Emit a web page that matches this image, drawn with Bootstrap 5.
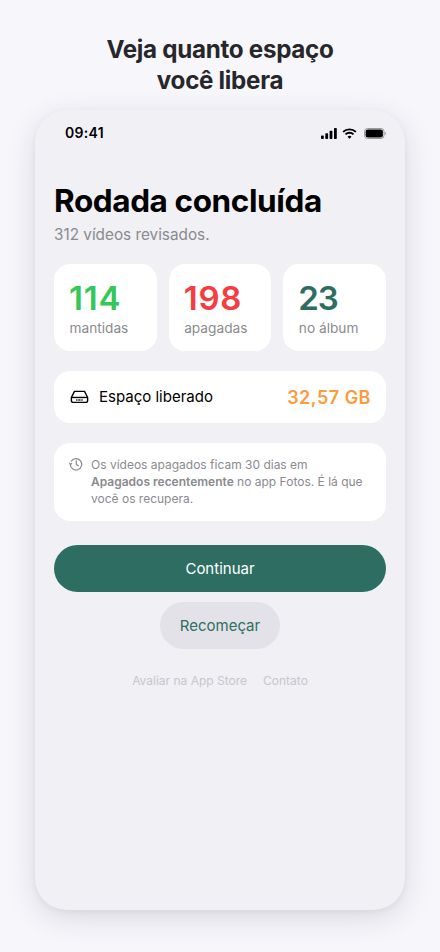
<!DOCTYPE html>
<html lang="pt-BR">
<head>
<meta charset="utf-8">
<title>Rodada concluída</title>
<link href="https://cdn.jsdelivr.net/npm/bootstrap@5.3.0/dist/css/bootstrap.min.css" rel="stylesheet">
<style>
html,body{height:100%;}
body{background:#f6f6fb;font-family:Inter,"Liberation Sans",sans-serif;overflow:hidden;color:#000;}
.shot{width:440px;height:952px;padding-top:34px;}
.headline{font-size:24.2px;line-height:31px;font-weight:700;letter-spacing:-.3px;color:#26262b;margin:0 0 14px;height:62px;}
.phone{width:370px;height:800px;margin:0 auto;background:#f0f0f5;border-radius:32px;box-shadow:0 2px 6px rgba(30,30,50,.05),0 8px 30px rgba(30,30,50,.13);padding:0 19px;}
.statusline{height:46px;padding:0 0 0 11px;margin-bottom:25px;}
.clock{font-size:14px;font-weight:600;letter-spacing:.3px;line-height:46px;}
.status-icons{gap:5px;}
.batt{margin-left:2px;}
.maintitle{font-size:31.5px;line-height:40px;font-weight:700;letter-spacing:-.4px;margin:0 0 3px;}
.subline{font-size:15.3px;line-height:22px;color:#8a8a8e;margin:0 0 18px;}
.statrow{gap:12px;}
.tile{background:#fff;border-radius:16px;}
.stat{flex:1 1 0;height:87px;padding:15px 15px 0;}
.num{font-size:33px;line-height:39px;font-weight:600;}
.lbl{font-size:13.7px;line-height:20px;color:#8a8a8e;padding-left:.5px;}
.c-green{color:#34c759;letter-spacing:.8px;}
.c-red{color:#f63c41;letter-spacing:.8px;}
.c-teal{color:#2e6e62;letter-spacing:-1.2px;}
.freed{height:52px;margin-top:20px;padding:0 15px 0 16px;}
.freed-group{gap:10px;}
.freed-label{font-size:15px;color:#000;}
.freed-val{font-size:18px;font-weight:600;letter-spacing:.5px;color:#ff9a3c;}
.note{height:78px;margin-top:20px;padding:13px 15px 0;font-size:12px;line-height:17.2px;color:#8a8a8e;}
.note b{font-weight:600;}
.note-ico{margin-top:1px;}
.cta{display:block;width:100%;height:47px;margin-top:24px;background:#2e6e62;border:0;border-radius:24px;color:#fff;font-size:15px;line-height:47px;padding:0;}
.cta:hover{background:#2e6e62;color:#fff;}
.again{display:block;width:120px;height:47px;margin:10px auto 0;background:#e2e2e8;border:0;border-radius:24px;color:#2e6e62;font-size:15px;line-height:47px;padding:0;}
.again:hover{background:#e2e2e8;color:#2e6e62;}
.foot{margin-top:24px;gap:16px;font-size:12px;line-height:16px;color:#c7c7cc;}
.foot a{color:inherit;text-decoration:none;}
</style>
</head>
<body>
<div class="shot">
  <h1 class="headline text-center">Veja quanto espaço<br>você libera</h1>
  <div class="phone">
    <div class="statusline d-flex justify-content-between align-items-center">
      <span class="clock">09:41</span>
      <span class="status-icons d-flex align-items-center">
        <svg width="16" height="11" viewBox="0 0 16 11" fill="#000"><rect x="0" y="7.500" width="2.800" height="3.500" rx=".7"/><rect x="4.300" y="5.300" width="2.800" height="5.700" rx=".7"/><rect x="8.600" y="2.700" width="2.800" height="8.300" rx=".7"/><rect x="13" y="0" width="2.800" height="11" rx=".7"/></svg>
        <svg width="15" height="11" viewBox="0 0 16 12" fill="none" stroke="#000" stroke-width="2"><path d="M1 4.300a10 10 0 0 1 14 0"/><path d="M3.600 7a6.300 6.300 0 0 1 8.800 0"/><path d="M8 11.800 5.800 9.500a3.100 3.100 0 0 1 4.400 0z" fill="#000" stroke="none"/></svg>
        <svg class="batt" width="22" height="11" viewBox="0 0 22 11"><rect x=".5" y=".5" width="19.500" height="10" rx="3" fill="none" stroke="#9a9a9e"/><rect x="1.600" y="1.600" width="17.300" height="7.800" rx="2.200" fill="#000"/><path d="M20.800 3.800c.7.200 1 .9 1 1.700s-.3 1.500-1 1.700z" fill="#9a9a9e"/></svg>
      </span>
    </div>
    <h2 class="maintitle">Rodada concluída</h2>
    <p class="subline">312 vídeos revisados.</p>
    <div class="d-flex statrow">
      <div class="tile stat"><div class="num c-green">114</div><div class="lbl">mantidas</div></div>
      <div class="tile stat"><div class="num c-red">198</div><div class="lbl">apagadas</div></div>
      <div class="tile stat"><div class="num c-teal">23</div><div class="lbl">no álbum</div></div>
    </div>
    <div class="tile freed d-flex justify-content-between align-items-center">
      <span class="freed-group d-flex align-items-center">
        <svg width="19" height="14" viewBox="0 0 20 15" fill="none" stroke="#000" stroke-width="1.500" stroke-linejoin="round"><path d="M4.600 1.500h10.800l3.300 6.600v3.200a2 2 0 0 1-2 2H3.300a2 2 0 0 1-2-2V8.100z"/><path d="M1.500 8h17"/><path d="M6.500 10.700h7" stroke-width="1.500" stroke-dasharray="1 .6"/></svg>
        <span class="freed-label">Espaço liberado</span>
      </span>
      <span class="freed-val">32,57 GB</span>
    </div>
    <div class="tile note d-flex gap-2">
      <svg class="note-ico flex-shrink-0" width="14" height="14" viewBox="0 0 14 14" fill="none" stroke="#8a8a8e" stroke-width="1.200" stroke-linecap="round" stroke-linejoin="round"><path d="M2.300 4.100A5.700 5.700 0 1 1 1.300 7.500"/><path d="M.5 6.200l.9 1.300 1.300-1"/><path d="M7.300 3.800v3.600l2.200 1.300"/></svg>
      <div>Os vídeos apagados ficam 30 dias em<br><b>Apagados recentemente</b> no app Fotos. É lá que você os recupera.</div>
    </div>
    <button type="button" class="btn cta">Continuar</button>
    <button type="button" class="btn again">Recomeçar</button>
    <div class="foot d-flex justify-content-center">
      <a href="#">Avaliar na App Store</a>
      <a href="#">Contato</a>
    </div>
  </div>
</div>
<script src="https://cdn.jsdelivr.net/npm/bootstrap@5.3.0/dist/js/bootstrap.bundle.min.js"></script>
</body>
</html>
